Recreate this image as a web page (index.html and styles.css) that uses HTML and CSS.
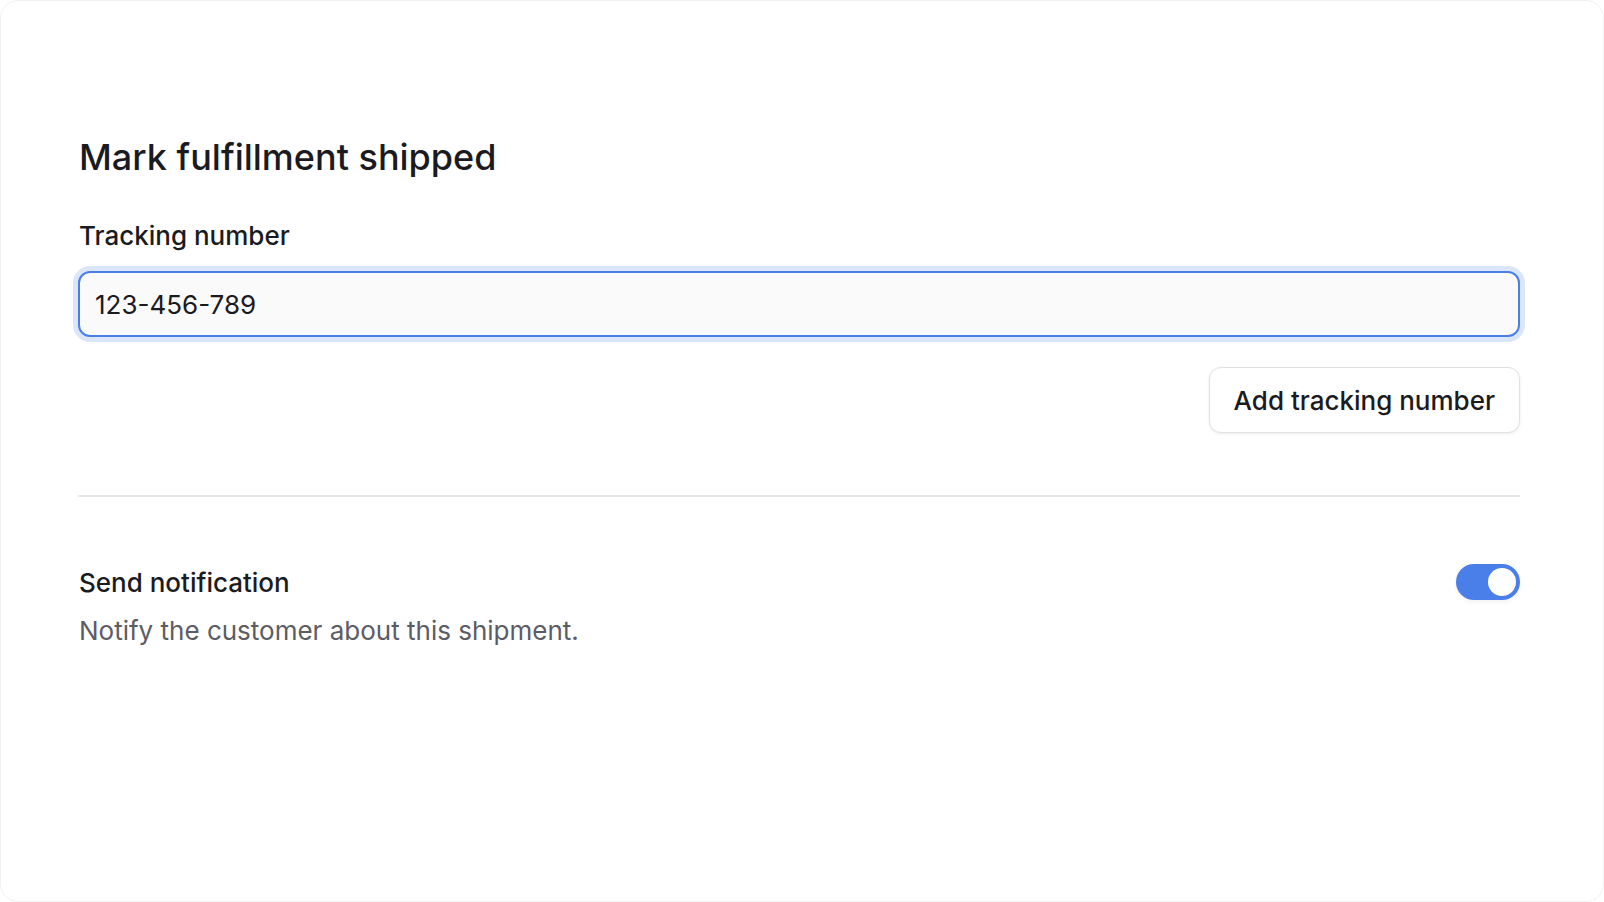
FILE: index.html
```html
<!DOCTYPE html>
<html lang="en">
<head>
    <meta charset="UTF-8">
    <meta name="viewport" content="width=device-width, initial-scale=1.0">
    <title>Mark fulfillment shipped</title>
    <link rel="stylesheet" href="styles.css">
</head>
<body>
    <div class="card">
        <h1 class="title">Mark fulfillment shipped</h1>

        <label class="field-label" for="tracking">Tracking number</label>
        <input class="field-input" type="text" id="tracking" value="123-456-789">

        <div class="actions">
            <button class="btn">Add tracking number</button>
        </div>

        <hr class="divider">

        <div class="setting">
            <div class="setting-text">
                <div class="setting-title">Send notification</div>
                <div class="setting-desc">Notify the customer about this shipment.</div>
            </div>
            <div class="toggle on"><span class="knob"></span></div>
        </div>
    </div>
</body>
</html>
```

FILE: styles.css
```css
* {
    box-sizing: border-box;
}
body {
    font-family: Inter, "Noto Sans", sans-serif;
    background-color: #ffffff;
    color: #1b1b1f;
    margin: 0;
}
.card {
    height: 100vh;
    background: #fff;
    border: 1px solid #f1f1f1;
    border-radius: 18px;
    padding: 136px 83px 0 77px;
    display: flex;
    flex-direction: column;
}
.title {
    font-size: 36px;
    line-height: 40px;
    font-weight: 500;
    margin: 0 0 43px;
    padding-left: 1px;
}
.field-label {
    font-size: 26px;
    line-height: 32px;
    font-weight: 500;
    margin-bottom: 19px;
    padding-left: 1px;
}
.field-input {
    height: 66px;
    width: 100%;
    padding: 0 15px;
    font-family: inherit;
    font-size: 26px;
    color: #1b1b1f;
    background: #fafafa;
    border: 2px solid #4a7fe8;
    border-radius: 12px;
    box-shadow: 0 0 0 5px #dce6fb;
    outline: none;
}
.actions {
    display: flex;
    justify-content: flex-end;
    margin-top: 30px;
}
.btn {
    height: 66px;
    padding: 0 24px;
    font-family: inherit;
    font-size: 26px;
    font-weight: 500;
    color: #1b1b1f;
    background: #fff;
    border: 1px solid #e2e2e2;
    border-radius: 12px;
    box-shadow: 0 1px 3px rgba(0, 0, 0, 0.08);
    cursor: pointer;
}
.divider {
    border: none;
    border-top: 2px solid #e6e6e6;
    margin: 62px 0 0;
}
.setting {
    display: flex;
    justify-content: space-between;
    align-items: flex-start;
    margin-top: 70px;
    padding-left: 1px;
}
.setting-title {
    font-size: 26px;
    line-height: 32px;
    font-weight: 500;
}
.setting-desc {
    font-size: 26px;
    line-height: 32px;
    color: #5c5c66;
    margin-top: 16px;
}
.toggle {
    width: 64px;
    height: 36px;
    border-radius: 18px;
    background: #4a7ee8;
    margin-top: -3px;
    padding: 4px;
    display: flex;
    justify-content: flex-end;
    box-shadow: 0 2px 4px rgba(0, 0, 0, 0.06);
}
.knob {
    width: 28px;
    height: 28px;
    border-radius: 50%;
    background: #fff;
}
```
